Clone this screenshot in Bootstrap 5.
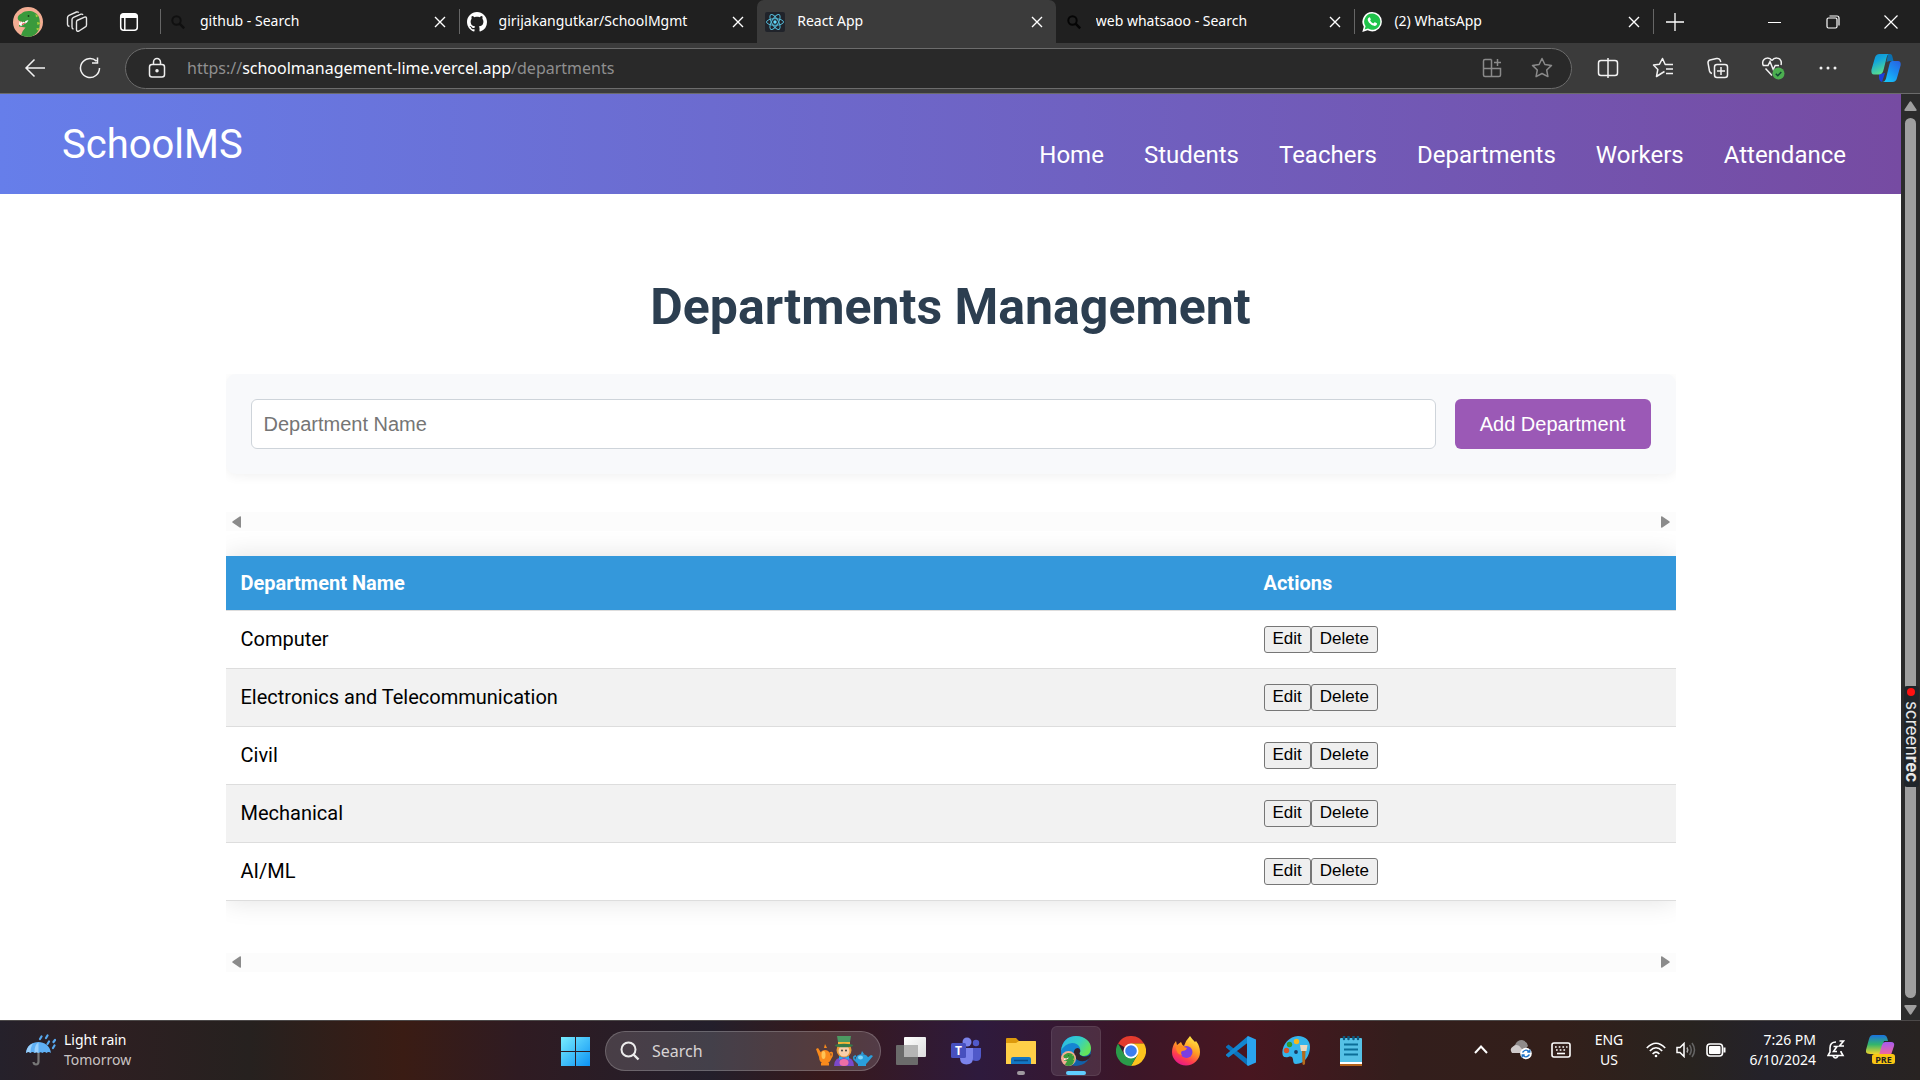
<!DOCTYPE html>
<html lang="en">
<head>
<meta charset="utf-8">
<meta name="viewport" content="width=device-width, initial-scale=1">
<title>React App</title>
<link rel="stylesheet" href="https://cdn.jsdelivr.net/npm/bootstrap@5.3.0/dist/css/bootstrap.min.css">
<style>
:root { --ui: "Noto Sans", "Open Sans", sans-serif; --app: Roboto, sans-serif; --form: "Liberation Sans", Arial, sans-serif; }
body { font-family: var(--ui); background: #fff; color: #000; }
svg { display: block; flex: none; }
button { font-family: inherit; }
.bare { background: none; border: 0; padding: 0; color: inherit; display: flex; align-items: center; justify-content: center; }

/* tab strip */
.tabstrip { background: #202020; height: 43px; color: #fff; font-size: 14px; line-height: 20px; }
.strip-start { width: 160px; padding-left: 13px; gap: 23px; }
.browser-tab { flex: 1 1 0; min-width: 0; padding: 0 9px 0 8px; position: relative; }
.browser-tab::before { content: ""; position: absolute; left: 0; top: 9px; bottom: 9px; width: 1px; background: #666; }
.browser-tab.current { background: #3b3b3b; border-radius: 7px 7px 0 0; }
.browser-tab.current::before, .browser-tab.after-current::before { display: none; }
.tab-text { padding-bottom: 2px; }
.tab-icon { width: 20px; height: 20px; margin-right: 12px; }
.tab-x { width: 20px; height: 20px; }
.strip-end { width: 267px; position: relative; }
.strip-end::before { content: ""; position: absolute; left: 0; top: 9px; bottom: 9px; width: 1px; background: #666; }
.win-btn { width: 58px; height: 43px; }
.new-tab { margin-left: 13px; }

/* toolbar */
.toolbar { background: #3b3b3b; height: 51px; border-bottom: 1px solid #6b6b6b; color: #f2f2f2; padding: 0 3px 0 7px; }
.tool { width: 55px; height: 40px; }
.tool-wide { width: 62px; }
.address { height: 41px; border: 1px solid #6c6c6c; border-radius: 21px; background: #292929; margin: 0 8px 0 8px; padding: 0 4px; }
.address-tool { width: 50px; color: #8a8a8a; }
.lock-slot { width: 53px; }
.url { font-size: 16px; color: #8f8f8f; outline: 0; white-space: nowrap; overflow: hidden; }
.url b { color: #fff; font-weight: 400; }

/* application */
.app { font-family: var(--app); }
.app-nav { min-height: 100px; background: linear-gradient(to right, #667eea, #764ba2); padding: 2px 55px 0 62px; }
.app-brand { font-size: 40px; line-height: 48px; color: #fff; text-decoration: none; }
.app-links { gap: 40px; margin-top: 19px; font-size: 24px; line-height: 30px; }
.app-links a { color: #fff; text-decoration: none; }
.page { max-width: 1450px; margin: 0 auto; padding-top: 83px; }
.page-title { font-size: 50px; line-height: 60px; font-weight: 700; color: #2c3e50; margin-bottom: 37px; }
.clip { overflow: hidden; }
.add-form { background: #f8f9fb; border-radius: 10px; padding: 25px; gap: 19px; box-shadow: 0 2px 12px rgba(0,0,0,.06); margin-bottom: 38px; }
.dept-input { height: 50px; border: 1px solid #ced4da; border-radius: 6px; padding: 0 12px; font: 20px/24px var(--form); color: #000; background: #fff; min-width: 0; }
.dept-input::placeholder { color: #757575; opacity: 1; }
.dept-add { height: 50px; border: 0; border-radius: 6px; background: #9b59b6; color: #fff; font: 20px/24px var(--form); width: 196px; }
.hscroll { height: 19px; background: #fcfcfc; padding: 0 6px; }
.table-shell { padding: 25px 0 52px; overflow: hidden; }
.dept-table { table-layout: fixed; width: 100%; box-shadow: 0 0 25px rgba(0,0,0,.12); font-size: 20px; line-height: 24px; background: #fff; }
.dept-table th, .dept-table td { padding: 0 15px; vertical-align: middle; border-bottom: 1px solid #ddd; }
.dept-table th { height: 54px; background: #3498db; color: #fff; font-weight: 700; }
.dept-table td { height: 58px; }
.dept-table th:first-child { width: 1023px; }
.dept-table tbody tr:nth-child(even) { background: #f2f2f2; }
.row-btn { font: 17px/20px var(--form); height: 27px; padding: 0 8px; border: 1px solid #767676; border-radius: 3px; background: #efefef; color: #000; }

/* page scrollbar */
.vscroll { width: 19px; background: #2b2b2b; padding: 7px 0 5px; position: relative; }
.vthumb { width: 11px; border-radius: 6px; background: #9f9f9f; margin: 7px 0; }
.recorder { position: absolute; top: 592px; left: 3px; width: 15px; height: 101px; background: #20252a; border-radius: 3px; color: #e8e8e8; writing-mode: vertical-rl; font: 17px/15px Inter, sans-serif; padding-top: 15px; white-space: nowrap; }
.recorder::before { content: ""; position: absolute; top: 2px; left: 3px; width: 8px; height: 8px; border-radius: 50%; background: #f11; }

/* taskbar */
.taskbar { height: 60px; border-top: 1px solid #4c4949; color: #fff; font-size: 14px; line-height: 20px;
  background: linear-gradient(to right, #25212b 0, #2e1f22 5%, #26211f 13%, #3a1c14 21%, #2f1b22 27%, #231f2b 37%, #38191b 43%, #2e1a3d 51%, #3c1628 59%, #481620 65%, #331e1c 73%, #331f1a 81%, #28231f 88%, #24222a 92%, #282322 100%); }
.weather { padding: 0 0 2px 26px; gap: 8px; }
.dock { gap: 5px; margin-left: 2px; }
.dock-item { width: 50px; height: 50px; border-radius: 6px; position: relative; }
.dock-item.active-app { background: rgba(255,255,255,.1); border: 1px solid rgba(255,255,255,.08); }
.dock-item.open-app::after, .dock-item.active-app::after { content: ""; position: absolute; bottom: 1px; left: 50%; width: 8px; margin-left: -4px; height: 4px; border-radius: 2px; background: #a09aa0; }
.dock-item.active-app::after { width: 20px; margin-left: -10px; bottom: 0; background: #60cdff; }
.find { width: 276px; height: 40px; border-radius: 20px; border: 1px solid rgba(255,255,255,.2); background: rgba(255,255,255,.15); padding: 0 7px 0 14px; }
.find input { background: none; border: 0; outline: 0; color: #ddd; font: 16px/24px var(--ui); width: 100px; margin: 0 auto 0 12px; padding: 0; }
.find input::placeholder { color: #d8d4d4; opacity: 1; }
.dim { color: #c9c4c4; }
.tray { padding: 0 22px 2px 0; }
.tray-btn { width: 40px; height: 48px; }
.tray-narrow { width: 30px; }
.lang { width: 56px; }
.clock { width: 85px; }
.tray-copilot { width: 34px; margin-left: 8px; }
</style>
<script src="https://cdn.jsdelivr.net/npm/bootstrap@5.3.0/dist/js/bootstrap.bundle.min.js"></script>
</head>
<body class="d-flex flex-column min-vh-100">

<svg width="0" height="0" class="position-absolute" aria-hidden="true">
  <symbol id="i-x" viewBox="0 0 20 20"><path d="M5 5l10 10M15 5L5 15" stroke="currentColor" stroke-width="1.4" fill="none"/></symbol>
  <symbol id="i-loupe" viewBox="0 0 20 20"><circle cx="8.5" cy="8.5" r="4.2" fill="none" stroke="currentColor" stroke-width="2"/><path d="M11.6 11.6l4.6 4.8" stroke="currentColor" stroke-width="2.4"/></symbol>
  <symbol id="i-dino" viewBox="0 0 30 30"><circle cx="15" cy="15" r="15" fill="#f3ad93"/><path d="M8 28.200Q9 24 12.500 20.500L6 19.500V17.500L13 16 6.500 14C3.500 12 4.500 8 8.500 6.500 12 3.500 18 3.500 21.500 5.500 26.500 8 27.500 13 26.500 20 25.800 25 22 29 16 30Q12 30 8 28.200z" fill="#3a9a3c"/><path d="M6.500 14l1 2 1-1.500 1 1.500 1-1.500 1 1.300 1-1.800 3-1-1.500 2.500-6 3.500-2-1.500z" fill="#fff"/><path d="M8.500 17l5-1.500-4 2.500z" fill="#d22"/><circle cx="15.500" cy="9" r=".9" fill="#173d19"/><path d="M22.500 7l3 2-2.500 1.200zM24 15l4 1-3.500 2zM23.500 21l4 .5-3.500 2z" fill="#a8cf3a"/></symbol>
  <symbol id="i-left" viewBox="0 0 9 12"><path d="M9 1.200v9.600q0 1.600-1.300.7L.7 6.800Q-.2 6 .7 5.200L7.700.5Q9-.4 9 1.200z" fill="#8b8b8b"/></symbol>
  <linearGradient id="g-cop1" x1="0" y1="0" x2="0.4" y2="1"><stop offset="0" stop-color="#0f8fd0"/><stop offset=".4" stop-color="#12a6dc"/><stop offset="1" stop-color="#58dc8e"/></linearGradient>
  <linearGradient id="g-cop2" x1="1" y1="0" x2="0.3" y2="1"><stop offset="0" stop-color="#2a5fe0"/><stop offset=".5" stop-color="#1a8df0"/><stop offset="1" stop-color="#17c3f8"/></linearGradient>
</svg>

<!-- Browser tabs -->
<div class="tabstrip d-flex flex-shrink-0">
  <div class="strip-start d-flex align-items-center">
    <button class="bare" aria-label="Profile"><svg width="30" height="30"><use href="#i-dino"/></svg></button>
    <button class="bare" aria-label="Workspaces"><svg width="22" height="22" viewBox="0 0 22 22" fill="none" stroke="#e6e6e6" stroke-width="1.4" stroke-linejoin="round"><path d="M11 9.500l7.500-3.300q2-.7 2 1.300V14q0 1.500-1.500 2.200L13 20q-2.500 1-2.500-1.200v-7.500q0-1.300.5-1.800z"/><path d="M7.500 18q-1.500-.2-1.500-2V8.500q0-1.500 1.500-2.200L15 3.200q1.400-.4 2 .6M3.500 15.500Q1.500 15 1.500 13.500V6.500q0-1.500 1.500-2.200L10.500 1q1.500-.4 2.200.7"/></svg></button>
    <button class="bare ms-2" aria-label="Tab actions"><svg width="20" height="20" viewBox="0 0 20 20"><rect x="1.700" y="1.700" width="16.600" height="16.600" rx="3" fill="none" stroke="#fff" stroke-width="1.500"/><path d="M1.500 6V4.500q0-3 3-3h11q3 0 3 3V6z" fill="#fff"/><path d="M5.800 6v12" stroke="#fff" stroke-width="1.500"/></svg></button>
  </div>
  <div class="browser-tab d-flex align-items-center"><svg class="tab-icon" style="color:#101010"><use href="#i-loupe"/></svg><span class="tab-text flex-grow-1 text-truncate">github - Search</span><button class="bare" aria-label="Close tab"><svg class="tab-x"><use href="#i-x"/></svg></button></div>
  <div class="browser-tab d-flex align-items-center"><svg class="tab-icon" viewBox="0 0 16 16" fill="#fff"><path d="M8 0C3.580 0 0 3.580 0 8c0 3.540 2.290 6.530 5.470 7.590.4.07.55-.17.55-.38 0-.19-.01-.82-.01-1.490-2.010.37-2.530-.49-2.690-.94-.09-.23-.48-.94-.82-1.130-.28-.15-.68-.52-.01-.53.63-.01 1.080.58 1.230.82.72 1.210 1.870.87 2.330.66.07-.52.28-.87.51-1.070-1.780-.2-3.640-.89-3.640-3.950 0-.87.31-1.590.82-2.150-.08-.2-.36-1.020.08-2.120 0 0 .67-.21 2.200.82.64-.18 1.320-.27 2-.27s1.360.09 2 .27c1.530-1.040 2.200-.82 2.200-.82.44 1.100.16 1.920.08 2.120.51.56.82 1.270.82 2.150 0 3.070-1.870 3.750-3.650 3.950.29.25.54.73.54 1.480 0 1.070-.01 1.930-.01 2.200 0 .21.15.46.55.38A8.010 8.010 0 0 0 16 8c0-4.420-3.580-8-8-8z"/></svg><span class="tab-text flex-grow-1 text-truncate">girijakangutkar/SchoolMgmt</span><button class="bare" aria-label="Close tab"><svg class="tab-x"><use href="#i-x"/></svg></button></div>
  <div class="browser-tab current d-flex align-items-center"><svg class="tab-icon" viewBox="0 0 20 20"><rect width="20" height="20" rx="2" fill="#20232a"/><g fill="none" stroke="#53b9d6" stroke-width="1"><ellipse cx="10" cy="10" rx="8.500" ry="3.300"/><ellipse cx="10" cy="10" rx="8.500" ry="3.300" transform="rotate(60 10 10)"/><ellipse cx="10" cy="10" rx="8.500" ry="3.300" transform="rotate(120 10 10)"/></g><circle cx="10" cy="10" r="1.700" fill="#61dafb"/></svg><span class="tab-text flex-grow-1 text-truncate">React App</span><button class="bare" aria-label="Close tab"><svg class="tab-x"><use href="#i-x"/></svg></button></div>
  <div class="browser-tab after-current d-flex align-items-center"><svg class="tab-icon" style="color:#050505"><use href="#i-loupe"/></svg><span class="tab-text flex-grow-1 text-truncate">web whatsaoo - Search</span><button class="bare" aria-label="Close tab"><svg class="tab-x"><use href="#i-x"/></svg></button></div>
  <div class="browser-tab d-flex align-items-center"><svg class="tab-icon" viewBox="0 0 20 20"><path d="M10.200 0A9.700 9.700 0 0 1 10.200 19.400Q7.800 19.400 5.600 18.300L.3 19.900 1.800 14.700A9.700 9.700 0 0 1 10.200 0z" fill="#fff"/><path d="M10.200 1.600A8.100 8.100 0 1 1 6 16.600L2.600 17.600 3.600 14.300A8.100 8.100 0 0 1 10.200 1.600z" fill="#1fc34a"/><path d="M7.300 5.300q.6-.2.800.4l.7 1.600q.1.400-.7 1.300 1 2.100 3.200 3l1-1.200q.3-.3.700-.1l1.800.9q.4.2.2 1-.6 1.600-2.300 1.700c-3.200-.1-6.900-3.600-7-6.300q.1-1.600 1.600-2.300z" fill="#fff"/></svg><span class="tab-text flex-grow-1 text-truncate">(2) WhatsApp</span><button class="bare" aria-label="Close tab"><svg class="tab-x"><use href="#i-x"/></svg></button></div>
  <div class="strip-end d-flex align-items-center">
    <button class="bare new-tab me-auto" aria-label="New tab"><svg width="18" height="18"><path d="M9 0v18M0 9h18" stroke="#fff" stroke-width="1.300"/></svg></button>
    <button class="bare win-btn" aria-label="Minimize"><svg width="13" height="14"><path d="M0 7.500h13" stroke="#fff"/></svg></button>
    <button class="bare win-btn" aria-label="Restore"><svg width="14" height="14" fill="none" stroke="#fff" stroke-width="1.200"><rect x="1" y="3" width="10" height="10" rx="1.500"/><path d="M3.500 1H11q2 0 2 2v7.500"/></svg></button>
    <button class="bare win-btn" aria-label="Close window"><svg width="14" height="14"><path d="M.5.5l13 13M13.500.5l-13 13" stroke="#fff" stroke-width="1.200"/></svg></button>
  </div>
</div>

<!-- Toolbar -->
<div class="toolbar d-flex align-items-center flex-shrink-0">
  <button class="bare tool" aria-label="Back"><svg width="22" height="20" fill="none" stroke="currentColor" stroke-width="1.500"><path d="M21 10H2M10.500 1.500L2 10l8.500 8.500"/></svg></button>
  <button class="bare tool" aria-label="Refresh"><svg width="22" height="22" fill="none" stroke="currentColor" stroke-width="1.500"><path d="M20.500 11a9.500 9.500 0 1 1-3-6.900M18.500.5v5.500h-5.500"/></svg></button>
  <div class="address d-flex align-items-center flex-grow-1">
    <div class="lock-slot d-flex justify-content-center"><svg width="18" height="22" fill="none" stroke="#eee" stroke-width="1.500"><rect x="1.500" y="7.500" width="15" height="12.500" rx="2.500"/><path d="M5.500 7.500V5a3.500 3.500 0 0 1 7 0v2.500"/><circle cx="9" cy="13.700" r="1" fill="#eee"/></svg></div>
    <div class="url flex-grow-1 ps-1" role="textbox" contenteditable="true" spellcheck="false" aria-label="Address">https://<b>schoolmanagement-lime.vercel.app</b>/departments</div>
    <button class="bare address-tool" aria-label="App available"><svg width="20" height="20" fill="none" stroke="currentColor" stroke-width="1.500"><path d="M9.500 1.500H3Q1.500 1.500 1.500 3v14q0 1.500 1.500 1.500h14q1.500 0 1.500-1.500v-6.500H1.500M9.500 1.500v17M15.500 1v7M12 4.500h7"/></svg></button>
    <button class="bare address-tool" aria-label="Favorite this page"><svg width="22" height="22" viewBox="0 0 22 22" fill="none" stroke="currentColor" stroke-width="1.500" stroke-linejoin="round"><path d="M11 1.500l2.900 6 6.600.9-4.800 4.600 1.200 6.600L11 16.500l-5.900 3.100 1.200-6.600L1.500 8.400l6.600-.9z"/></svg></button>
  </div>
  <button class="bare tool" aria-label="Split screen"><svg width="22" height="22" fill="none" stroke="currentColor" stroke-width="1.500"><path d="M8 3.500H4Q1.500 3.500 1.500 6v10q0 2.500 2.500 2.500h4M14 3.500h4q2.500 0 2.500 2.500v10q0 2.500-2.500 2.500h-4M11 1v20M8 3.500h3M8 18.500h3M11 3.500h3M11 18.500h3"/></svg></button>
  <button class="bare tool" aria-label="Favorites"><svg width="22" height="22" fill="none" stroke="currentColor" stroke-width="1.500" stroke-linejoin="round"><path d="M12.500 14.500l-2.500 1.500-5.500 3.500 1.300-7L1.500 8l6-.8L10.500 1.500 13.200 7.500H21M14 12H21M14 16.500h7"/></svg></button>
  <button class="bare tool" aria-label="Collections"><svg width="22" height="22" fill="none" stroke="currentColor" stroke-width="1.500"><rect x="7.500" y="7.500" width="13" height="13" rx="2.500"/><path d="M14 10v8M10 14h8M5 16.500Q3 16 2.500 14L1 6Q.8 3.700 3 3L9.500 1.500Q12 1 13 2.800L13.800 5"/></svg></button>
  <button class="bare tool" aria-label="Browser essentials"><svg width="24" height="24" fill="none" stroke="currentColor" stroke-width="1.500"><path d="M11 4.500C8.500 1 3.500 1.500 2 5q-.8 2.500.3 4.500H7l2-4 3.200 8 2-4H18M11 4.500c2.500-3.500 7.500-3 9 .5q.6 2 0 4M4.500 12.500L11 19.500"/><circle cx="17.500" cy="17.500" r="6" fill="#4caf50" stroke="none"/><path d="M14.800 17.700l2 2 3.500-3.700" stroke="#143"/></svg></button>
  <button class="bare tool" aria-label="Settings and more"><svg width="18" height="4" fill="currentColor"><circle cx="2" cy="2" r="1.500"/><circle cx="9" cy="2" r="1.500"/><circle cx="16" cy="2" r="1.500"/></svg></button>
  <button class="bare tool tool-wide" aria-label="Copilot"><svg width="30" height="28" viewBox="0 0 30 28"><path d="M17 0h2q2 0 2.500 3l1 4h-4l-3 1z" fill="#0b6fae"/><path d="M8 20l6-1-3 9q-2.500-.5-3-4z" fill="#1c3fd8"/><path d="M8.500 0H17.500Q16 1 15.500 4l-3 12q-1 4.500-5 4.500H3Q0 20.500.4 16L4 3.500Q5 0 8.500 0z" fill="url(#g-cop1)"/><path d="M21 7h6q3 0 2.700 4L26 24q-1 4-4.500 4H11q3 0 4-3.500L18.500 10q.7-3 2.500-3z" fill="url(#g-cop2)"/></svg></button>
</div>

<!-- Page viewport -->
<div class="d-flex flex-grow-1">
  <div class="app flex-grow-1">
    <nav class="app-nav d-flex justify-content-between align-items-center">
      <a class="app-brand" href="#">SchoolMS</a>
      <ul class="app-links list-unstyled d-flex mb-0">
        <li><a href="#">Home</a></li><li><a href="#">Students</a></li><li><a href="#">Teachers</a></li><li><a href="#">Departments</a></li><li><a href="#">Workers</a></li><li><a href="#">Attendance</a></li>
      </ul>
    </nav>
    <main class="page">
      <h1 class="page-title text-center">Departments Management</h1>
      <div class="clip">
        <form class="add-form d-flex">
          <input class="dept-input flex-grow-1" type="text" placeholder="Department Name" aria-label="Department Name">
          <button class="dept-add" type="button">Add Department</button>
        </form>
      </div>
      <div class="hscroll d-flex justify-content-between align-items-center" aria-hidden="true">
        <svg width="9" height="12" viewBox="0 0 9 12"><use href="#i-left"/></svg>
        <svg width="9" height="12" viewBox="0 0 9 12"><use href="#i-left" transform="rotate(180 4.500 6)"/></svg>
      </div>
      <div class="table-shell">
        <table class="dept-table">
          <thead><tr><th scope="col">Department Name</th><th scope="col">Actions</th></tr></thead>
          <tbody>
            <tr><td>Computer</td><td><div class="d-flex"><button class="row-btn">Edit</button><button class="row-btn">Delete</button></div></td></tr>
            <tr><td>Electronics and Telecommunication</td><td><div class="d-flex"><button class="row-btn">Edit</button><button class="row-btn">Delete</button></div></td></tr>
            <tr><td>Civil</td><td><div class="d-flex"><button class="row-btn">Edit</button><button class="row-btn">Delete</button></div></td></tr>
            <tr><td>Mechanical</td><td><div class="d-flex"><button class="row-btn">Edit</button><button class="row-btn">Delete</button></div></td></tr>
            <tr><td>AI/ML</td><td><div class="d-flex"><button class="row-btn">Edit</button><button class="row-btn">Delete</button></div></td></tr>
          </tbody>
        </table>
      </div>
      <div class="hscroll d-flex justify-content-between align-items-center" aria-hidden="true">
        <svg width="9" height="12" viewBox="0 0 9 12"><use href="#i-left"/></svg>
        <svg width="9" height="12" viewBox="0 0 9 12"><use href="#i-left" transform="rotate(180 4.500 6)"/></svg>
      </div>
    </main>
  </div>
  <div class="vscroll d-flex flex-column align-items-center flex-shrink-0">
    <svg width="13" height="10"><path d="M5.500 1q1-1.500 2 0l5 7.500q.7 1.500-1 1.500h-10q-1.700 0-1-1.500z" fill="#9f9f9f"/></svg>
    <div class="vthumb flex-grow-1"></div>
    <svg width="13" height="10"><path d="M5.500 9q1 1.500 2 0l5-7.500q.7-1.500-1-1.500h-10q-1.700 0-1 1.500z" fill="#9f9f9f"/></svg>
    <div class="recorder">screen<strong>rec</strong></div>
  </div>
</div>

<!-- Taskbar -->
<footer class="taskbar d-flex align-items-center flex-shrink-0">
  <div class="weather d-flex align-items-center" style="flex:1 1 0">
    <svg width="30" height="32" viewBox="0 0 30 32"><path d="M12.500 18v9.500q0 3-2.500 3-2.300 0-2.500-2.500" fill="none" stroke="#777" stroke-width="2.200"/><path d="M0 19C1 5 23 4 25 19q-2.500-2-4.500 0-2-2-4 0-2-1.500-4 0-2-1.500-4 0-2-2-4 0-2-2-4.500 0z" fill="#5fb0f5"/><path d="M8.500 19Q8 11 12.500 8.500V19q-2-1.500-4 0zM0 19Q1 11 7 9.500 4.500 13 4.500 19q-2-2-4.500 0z" fill="#9bd0fb"/><path d="M14 5l1.500-2.500M20 4l1.500-2.500M21.500 10l1.500-2.500M27.500 8l1.500-2M27 14l1.500-2.500" stroke="#57a8ee" stroke-width="2.200" stroke-linecap="round"/></svg>
    <div><div>Light rain</div><div class="dim">Tomorrow</div></div>
  </div>
  <div class="dock d-flex align-items-center">
    <button class="bare dock-item" aria-label="Start"><svg width="30" height="30"><defs><linearGradient id="g-win" gradientUnits="userSpaceOnUse" x1="0" y1="0" x2="30" y2="30"><stop offset="0" stop-color="#7cf0ff"/><stop offset="1" stop-color="#0c92f4"/></linearGradient></defs><path d="M1 1h14v14H1zM16 1h14v14H16zM1 16h14v14H1zM16 16h14v14H16z" fill="url(#g-win)"/></svg></button>
    <div class="find d-flex align-items-center">
      <svg width="20" height="20" fill="none" stroke="#ececec"><circle cx="8.500" cy="8.500" r="7" stroke-width="2"/><path d="M13.500 13.500l5 5" stroke-width="2.400"/></svg>
      <input type="text" placeholder="Search" aria-label="Search">
      <svg width="57" height="32" viewBox="0 0 57 32"><g fill="#f98a1c"><ellipse cx="9" cy="22" rx="6" ry="7"/><path d="M3 22L0 14l2-1 4 6zM8 13l1-4 2 4z"/><path d="M14 18q3-2 2 3l-3 5" fill="none" stroke="#f98a1c" stroke-width="1.600"/><rect x="5" y="28" width="8" height="2.500"/></g><ellipse cx="7.500" cy="20" rx="2" ry="4" fill="#ffc355"/><path d="M18 31q0-9 10-9t10 9z" fill="#7b49c9"/><circle cx="28" cy="15" r="7.500" fill="#e89a38"/><circle cx="28" cy="16" r="5.500" fill="#f9cfaa"/><circle cx="26" cy="15.500" r=".9" fill="#333"/><circle cx="30" cy="15.500" r=".9" fill="#333"/><path d="M21 1h14l-1.500 8.500h-11z" fill="#4c9a62"/><path d="M22 7h12v2.500H22z" fill="#f3b53b"/><ellipse cx="28" cy="10.500" rx="9" ry="1.800" fill="#35794a"/><path d="M28 23l-5-2v4zM28 23l5-2v4z" fill="#2aa8ee"/><ellipse cx="28" cy="27.500" rx="4.500" ry="3.500" fill="#ef6fa5"/><g fill="#2a9fdb"><ellipse cx="46" cy="24.500" rx="6.500" ry="5.500"/><path d="M45 19l1-3 2 3zM51 23l4-3 2 1-5 6z"/><path d="M40 21q-3 0-2 3l3 3" fill="none" stroke="#2a9fdb" stroke-width="1.500"/><rect x="42" y="29" width="8" height="2"/></g><ellipse cx="44.500" cy="22.500" rx="2.500" ry="2" fill="#7fd6f7"/></svg>
    </div>
    <button class="bare dock-item" aria-label="Task view"><svg width="30" height="28"><defs><linearGradient id="g-tv" x1="0" y1="0" x2="1" y2="1"><stop offset="0" stop-color="#fff"/><stop offset="1" stop-color="#ddd"/></linearGradient></defs><rect x="8" y="0" width="22" height="20" rx="1" fill="url(#g-tv)"/><rect x="0" y="8" width="22" height="20" rx="1" fill="#6b6b6b"/><rect x="8" y="8" width="14" height="12" fill="#b5b5b5"/></svg></button>
    <button class="bare dock-item" aria-label="Teams"><svg width="30" height="28" viewBox="0 0 30 28"><circle cx="25" cy="6" r="3.200" fill="#5059c9"/><path d="M20 11h10v8q0 5-5 5-3 0-5-2z" fill="#5059c9"/><circle cx="16" cy="5" r="4.500" fill="#7b83eb"/><path d="M9 11h13v10q0 6.500-6.500 6.500T9 21z" fill="#7b83eb"/><rect y="6" width="15" height="15" rx="1.500" fill="#4750be"/><text x="7.500" y="18" text-anchor="middle" font-family="Open Sans, sans-serif" font-weight="700" font-size="12" fill="#fff">T</text></svg></button>
    <button class="bare dock-item open-app" aria-label="File Explorer"><svg width="30" height="28" viewBox="0 0 30 28"><path d="M0 2Q0 1 1 1h9l3 3h16q1 0 1 1v6H0z" fill="#dd9a0c"/><path d="M0 6h10l3-2h16q1 0 1 1v22H0z" fill="#ffcf48"/><path d="M5 27v-5q0-2 2-2h16q2 0 2 2v5z" fill="#1377c4"/><path d="M8 23.500h14" stroke="#0b4c86" stroke-width="1.500"/></svg></button>
    <button class="bare dock-item active-app" aria-label="Microsoft Edge"><svg width="30" height="30" viewBox="0 0 30 30"><defs><linearGradient id="g-e1" x1="0" y1="0" x2="1" y2=".5"><stop offset="0" stop-color="#2bb4ef"/><stop offset=".6" stop-color="#35cfc4"/><stop offset="1" stop-color="#64e35a"/></linearGradient></defs><circle cx="15" cy="15" r="15" fill="#1260a8"/><path d="M0 15a15 15 0 0 1 13-9q9 0 9 9H13q-2 5 2 11-3 3-8 1Q0 23 0 15z" fill="#1585d2"/><path d="M0 15C1 5 7 0 15 0c9 0 15 6 15 12 0 5-3 8-7 8-3 0-5-1-4.500-3Q20 15 19 12 17 7 11 7 4 7.500 0 15z" fill="url(#g-e1)"/><path d="M13 15q1-3 4-3 3 1 2 4-2 3 3 4.500 5 .8 7.500-2.500 1 2-2 5-5 4-11 1-4-3-3.500-9z" fill="#35202c"/><use href="#i-dino" x="0" y="15" width="15" height="15"/></svg></button>
    <button class="bare dock-item" aria-label="Chrome"><svg width="30" height="30" viewBox="0 0 30 30"><path d="M15 15L2 7.500A15 15 0 0 1 28 7.500H15z" fill="#e33b2e"/><path d="M28 7.500A15 15 0 0 1 15 30l6.500-11.200L15 7.500z" fill="#fcc31e"/><path d="M2 7.500A15 15 0 0 0 15 30l6.500-11.200H8.500z" fill="#2a9a49"/><circle cx="15" cy="15" r="7.500" fill="#fff"/><circle cx="15" cy="15" r="5.800" fill="#3b7ded"/></svg></button>
    <button class="bare dock-item" aria-label="Firefox"><svg width="28" height="30" viewBox="0 0 28 30"><defs><linearGradient id="g-ff" x1=".8" y1="0" x2=".3" y2="1"><stop offset="0" stop-color="#fff04a"/><stop offset=".45" stop-color="#ff9a22"/><stop offset=".75" stop-color="#ff3d4f"/><stop offset="1" stop-color="#e3158e"/></linearGradient></defs><path d="M18 0q2 3 5 6l1-1q4 5 4 11a14 13.500 0 0 1-28 0Q0 10 4 5l1 4 4-3q1 3 3 4 2-6 6-10z" fill="url(#g-ff)"/><circle cx="14.500" cy="16" r="6" fill="#7a3ee0"/><path d="M4 11q5-3 8 0l3 1q-1 3-5 3-2 2 0 4-6-1-6-8z" fill="#ff8a20"/></svg></button>
    <button class="bare dock-item" aria-label="Visual Studio Code"><svg width="30" height="30" viewBox="0 0 30 30"><path d="M0 10.500l2.500-2L22 23.500V30L0 11.500z" fill="#0b72bb"/><path d="M0 19.500l2.500 2L22 6.500V0L0 18.500z" fill="#1286d0"/><path d="M22 0l8 3.500v23L22 30l-1-1.500v-27z" fill="#2aa3ee"/></svg></button>
    <button class="bare dock-item" aria-label="Paint"><svg width="28" height="29" viewBox="0 0 28 29"><path d="M16 0c8 0 12 5 12 11 0 8-5 17-14 17-4 0-2-5-4-7s-6 2-9-1C-2 12 6 0 16 0z" fill="#35b5ec"/><circle cx="14.500" cy="5.500" r="2.700" fill="#f5b91d"/><circle cx="7.500" cy="8.500" r="2.700" fill="#2f9a2e"/><circle cx="4.500" cy="14.500" r="2.700" fill="#d5532a"/><circle cx="14" cy="16" r="1.900" fill="#1a3a60"/><path d="M20 15h3.500l-.5 13q-1.500 2-2.500 0z" fill="#b56a1c"/><path d="M18 9h7.500l-1 6h-5.500z" fill="#ecd9bf"/></svg></button>
    <button class="bare dock-item" aria-label="Notepad"><svg width="22" height="30" viewBox="0 0 22 30"><rect x="0" y="2" width="22" height="27" rx="1" fill="#55c1e6"/><path d="M0 26h22v2H0z" fill="#fff"/><path d="M0 28h22v2H0z" fill="#b5641b"/><path d="M4 8.500h14M4 13.500h14M4 18.500h14" stroke="#0b6e98" stroke-width="1.800"/><path d="M4 0v3M8.500 0v3M13.500 0v3M18 0v3" stroke="#0d5a80" stroke-width="2.400" stroke-linecap="round"/></svg></button>
  </div>
  <div class="tray d-flex align-items-center justify-content-end" style="flex:1 1 0">
    <button class="bare tray-btn" aria-label="Show hidden icons"><svg width="14" height="9" fill="none" stroke="#fff" stroke-width="2"><path d="M1 8l6-6.500L13 8"/></svg></button>
    <button class="bare tray-btn" aria-label="OneDrive"><svg width="22" height="20" viewBox="0 0 22 20"><path d="M5 13a5 5 0 0 1 0-8q2-5 7-5 5 1 6 6l-6 7z" fill="#8f8b8b"/><path d="M2 13q-3-4 1-6.500Q8 3 11 8l4 5z" fill="#cfcaca"/><circle cx="16" cy="13.500" r="5.800" fill="#fff"/><path d="M12.500 12.500q3.500-4.500 7-.5M19.500 14.500q-3.500 4.500-7 .5M19.800 9.500V12h-2.500M12.200 17.500V15h2.500" fill="none" stroke="#1b72c8" stroke-width="1.300"/></svg></button>
    <button class="bare tray-btn" aria-label="Touch keyboard"><svg width="20" height="16" fill="none" stroke="#fff"><rect x="1" y="1" width="18" height="14" rx="2" stroke-width="1.600"/><path d="M4 5h12.500M5 8h11" stroke-width="1.700" stroke-dasharray="1.700 2"/><path d="M6 11.500h8" stroke-width="1.600"/></svg></button>
    <button class="bare lang text-center" aria-label="Language">ENG<br>US</button>
    <button class="bare tray-btn tray-narrow ms-1" aria-label="Wi-Fi"><svg width="20" height="16" fill="none" stroke="#fff" stroke-width="1.600"><path d="M.8 6q9.200-9.500 18.400 0M3.800 9q6.200-6.500 12.400 0M6.600 12q3.400-3.700 6.800 0"/><circle cx="10" cy="14" r="1.300" fill="#fff" stroke="none"/></svg></button>
    <button class="bare tray-btn tray-narrow" aria-label="Volume"><svg width="20" height="16" fill="none" stroke="#fff" stroke-width="1.500"><path d="M1 5.500h3L8 1.500v13l-4-4H1z"/><path d="M11 5.500q1.500 2.500 0 5" stroke="#aaa"/><path d="M13.500 3q3.500 5 0 10M16 1q5 7 0 14" stroke="#666"/></svg></button>
    <button class="bare tray-btn tray-narrow" aria-label="Battery"><svg width="20" height="14"><rect x="1" y="1" width="15.500" height="12" rx="3" fill="none" stroke="#fff" stroke-width="1.600"/><rect x="3" y="3" width="11.500" height="8" rx="1" fill="#fff"/><path d="M18.500 4.500v5" stroke="#fff" stroke-width="2"/></svg></button>
    <button class="bare clock text-end justify-content-end" aria-label="Clock">7:26 PM<br>6/10/2024</button>
    <button class="bare tray-btn" aria-label="Notifications"><svg width="18" height="20" fill="none" stroke="#fff" stroke-width="1.600"><path d="M9 2Q3 2 3 8v4l-2 3.500h15L14 12v-1M6 16q2.500 4 5 0M6.500 6.500H10l-3.500 5H10M12.500 1H16.500l-4 5h4.500"/></svg></button>
    <button class="bare tray-copilot" aria-label="Copilot"><svg width="30" height="29" viewBox="0 0 30 29"><defs><linearGradient id="g-p1" x1="0" y1="0" x2="0" y2="1"><stop offset="0" stop-color="#1a72e0"/><stop offset=".5" stop-color="#33b56c"/><stop offset="1" stop-color="#f1d52b"/></linearGradient><linearGradient id="g-p2" x1="0" y1="0" x2="0" y2="1"><stop offset="0" stop-color="#a65bf0"/><stop offset="1" stop-color="#f4689a"/></linearGradient></defs><path d="M7 0h11q3 0 4 6h-4l-4 13H4q-5 0-4-4L3 4q1-4 4-4z" fill="url(#g-p1)"/><path d="M19 7h6q4 0 3 4l-3 9H13l3-10q1-3 3-3z" fill="url(#g-p2)"/><rect x="6" y="19" width="23" height="10" rx="2.500" fill="#f9c613"/><text x="17.500" y="27.500" text-anchor="middle" font-family="Open Sans, sans-serif" font-weight="700" font-size="9" fill="#222">PRE</text></svg></button>
  </div>
</footer>
</body>
</html>
